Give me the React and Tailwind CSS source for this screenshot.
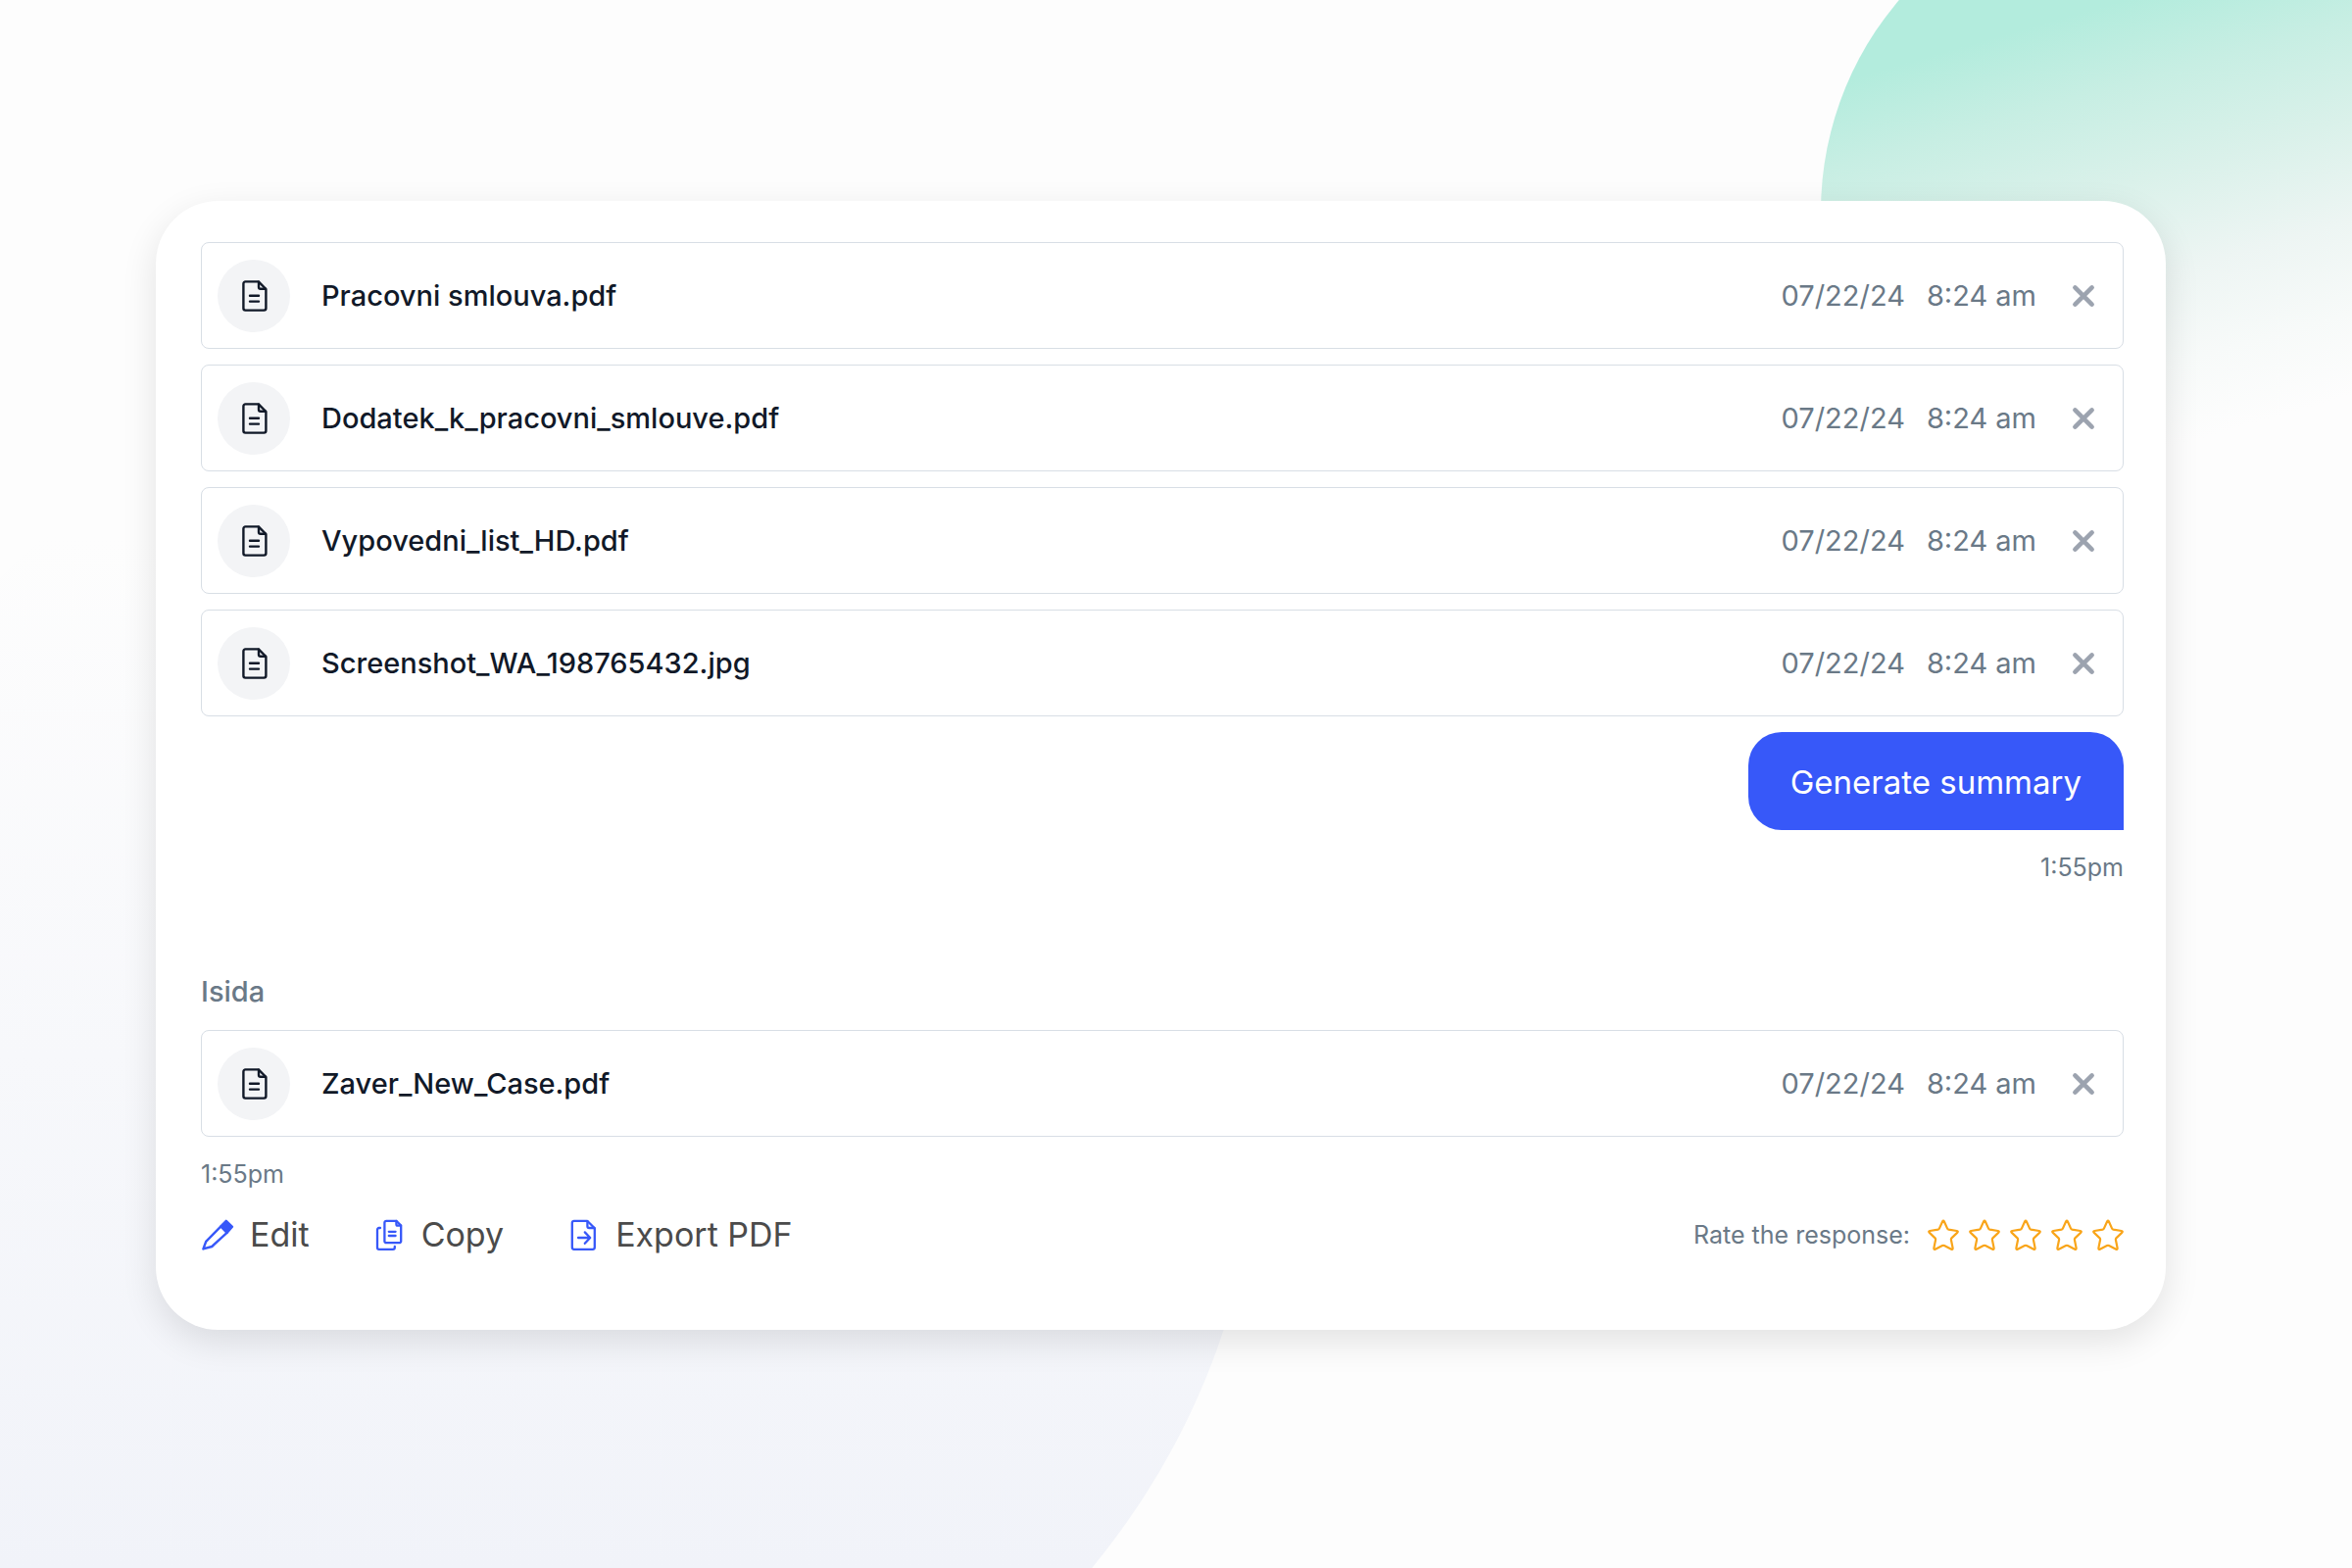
import React, { useState } from 'react';

const FILES = [
    'Pracovni smlouva.pdf',
    'Dodatek_k_pracovni_smlouve.pdf',
    'Vypovedni_list_HD.pdf',
    'Screenshot_WA_198765432.jpg',
];

const FileIcon = () => (
    <svg className="h-8 w-8" viewBox="0 0 32 32" fill="none" stroke="currentColor" strokeWidth="2.4" strokeLinejoin="round" strokeLinecap="round" aria-hidden="true">
        <path d="M7.4 1.4h13.4l7.6 7.6v19.6a2 2 0 0 1-2 2h-19a2 2 0 0 1-2-2V3.4a2 2 0 0 1 2-2z" />
        <path d="M21 1.8v5.2a1.8 1.8 0 0 0 1.8 1.8h5.2M12 15.8h9M12 21.6h9" />
    </svg>
);

const CloseIcon = () => (
    <svg className="h-6 w-6" viewBox="0 0 24 24" fill="none" stroke="currentColor" strokeWidth="4.6" strokeLinecap="round" aria-hidden="true">
        <path d="M3.4 3.4l17.2 17.2M20.6 3.4L3.4 20.6" />
    </svg>
);

const PencilIcon = () => (
    <svg className="h-8 w-[34px] text-[#3758f9]" viewBox="0 0 34 32" fill="none" stroke="currentColor" strokeWidth="2.4" strokeLinejoin="round" aria-hidden="true">
        <path d="M2.4 30.4l2.8-7.6L20.4 7.4l6.2 6.4L11.2 28z" />
        <path d="M20.6 7.2l5.2-5.4 6.2 6-5.2 5.8z" fill="currentColor" />
    </svg>
);

const CopyIcon = () => (
    <svg className="h-8 w-8 text-[#3758f9]" viewBox="0 0 32 32" fill="none" stroke="currentColor" strokeWidth="2.3" strokeLinejoin="round" strokeLinecap="round" aria-hidden="true">
        <path d="M12.2 1.8h10.2l4.8 4.8v15.8a1.8 1.8 0 0 1-1.8 1.8H12.2a1.8 1.8 0 0 1-1.8-1.8V3.6a1.8 1.8 0 0 1 1.8-1.8z" />
        <path d="M22.4 2v3.2a1.4 1.4 0 0 0 1.4 1.4H27M14.8 12.8h6.8M14.8 17h6.8M6 9H4.8a1.8 1.8 0 0 0-1.8 1.8V29a1.8 1.8 0 0 0 1.8 1.8h14.2a1.8 1.8 0 0 0 1.8-1.8v-1.2" />
    </svg>
);

const ExportIcon = () => (
    <svg className="h-8 w-8 text-[#3758f9]" viewBox="0 0 32 32" fill="none" stroke="currentColor" strokeWidth="2.3" strokeLinejoin="round" strokeLinecap="round" aria-hidden="true">
        <path d="M5.8 1.8h13.4l7.6 7.4v19.6a2 2 0 0 1-2 2h-19a2 2 0 0 1-2-2V3.8a2 2 0 0 1 2-2z" />
        <path d="M19.4 2.2v5a1.8 1.8 0 0 0 1.8 1.8h5.2M10 19h12M16.8 13.4l5.4 5.6-5.4 5.8" />
    </svg>
);

const StarIcon = ({ filled }) => (
    <svg className="h-8 w-8" viewBox="0 0 32 32" fill={filled ? 'currentColor' : 'none'} stroke="currentColor" strokeWidth="2.2" strokeLinejoin="round" aria-hidden="true">
        <path d="M15.2 2.2Q16 .8 16.8 2.2L20 9.4Q20.4 10.4 21.4 10.6L29.8 12Q31.4 12.4 30.4 13.6L24.4 19.4Q23.8 20 23.9 21L25.6 29.4Q25.8 31.4 24.2 30.8L17 27Q16 26.6 15 27L7.8 30.8Q6.2 31.4 6.4 29.4L8.1 21Q8.2 20 7.6 19.4L1.6 13.6Q.6 12.4 2.2 12L10.6 10.6Q11.6 10.4 12 9.4z" />
    </svg>
);

const FileRow = ({ name }) => (
    <div className="flex h-[109px] items-center rounded-lg border border-[#d8dee5] bg-white px-4">
        <div className="flex h-[74px] w-[74px] shrink-0 items-center justify-center rounded-full bg-[#f3f4f6] text-[#111928]">
            <FileIcon />
        </div>
        <p className="ml-8 flex-1 truncate text-[29px] leading-10 font-medium text-[#111928]">{name}</p>
        <div className="flex items-center text-[29px] leading-10 text-[#6a7987]">
            <span>07/22/24</span>
            <span className="ml-[22px]">8:24 am</span>
            <button type="button" aria-label={`Remove ${name}`} className="mr-3 ml-9 text-[#9ca3af]">
                <CloseIcon />
            </button>
        </div>
    </div>
);

const Action = ({ icon, label }) => (
    <button type="button" className="flex items-center gap-4 text-[34px] leading-10 text-[#4b4b4b]">
        {icon}
        {label}
    </button>
);

export default () => {
    const [rating, updateRating] = useState(0);

    return (
        <div className="relative isolate min-h-screen overflow-hidden bg-[#fdfdfd] pt-[205px] pr-[190px] pb-16 pl-[159px] font-['Inter',sans-serif]">
            <div className="absolute -top-[116px] -right-[122px] -z-10 h-[664px] w-[664px] rounded-full bg-[linear-gradient(164deg,#b3ecdd_24%,#c7eee3_34%,#daf1ea_46%,#edf5f3_58%,#f7faf9_69%,#fdfdfd_79%)]" />
            <div className="absolute -bottom-[273px] -left-[219px] -z-10 h-[1506px] w-[1506px] rounded-full bg-[linear-gradient(180deg,#fdfdfd_12%,#f1f3f9_82%)]" />

            <main className="rounded-[64px] bg-white pt-[42px] pr-[43px] pb-[77px] pl-[46px] shadow-[0_12px_36px_rgba(0,0,0,0.11)]">
                <section className="flex flex-col gap-4">
                    {FILES.map((name) => <FileRow key={name} name={name} />)}
                    <div className="flex flex-col items-end gap-[18px]">
                        <p className="rounded-[34px] rounded-br-none bg-[#3758f9] px-[43px] pt-[31px] pb-[29px] text-[33px] leading-10 text-white">
                            Generate summary
                        </p>
                        <time className="text-[25px] leading-10 text-[#6a7987]">1:55pm</time>
                    </div>
                </section>

                <section className="mt-[87px]">
                    <h2 className="text-[29px] leading-10 font-medium text-[#6a7987]">Isida</h2>
                    <div className="mt-[19px]">
                        <FileRow name="Zaver_New_Case.pdf" />
                    </div>
                    <time className="mt-[18px] block text-[25px] leading-10 text-[#6a7987]">1:55pm</time>
                    <div className="mt-[22px] flex items-center justify-between">
                        <div className="flex items-center gap-[66px]">
                            <Action icon={<PencilIcon />} label="Edit" />
                            <Action icon={<CopyIcon />} label="Copy" />
                            <Action icon={<ExportIcon />} label="Export PDF" />
                        </div>
                        <div className="flex items-center gap-[18px]">
                            <span className="text-[25px] leading-10 text-[#6a7987]">Rate the response:</span>
                            <div className="flex gap-[10px] text-[#f9a51a]">
                                {[1, 2, 3, 4, 5].map((value) => (
                                    <button key={value} type="button" aria-label={`${value} stars`} onClick={() => updateRating(value)}>
                                        <StarIcon filled={value <= rating} />
                                    </button>
                                ))}
                            </div>
                        </div>
                    </div>
                </section>
            </main>
        </div>
    );
};
